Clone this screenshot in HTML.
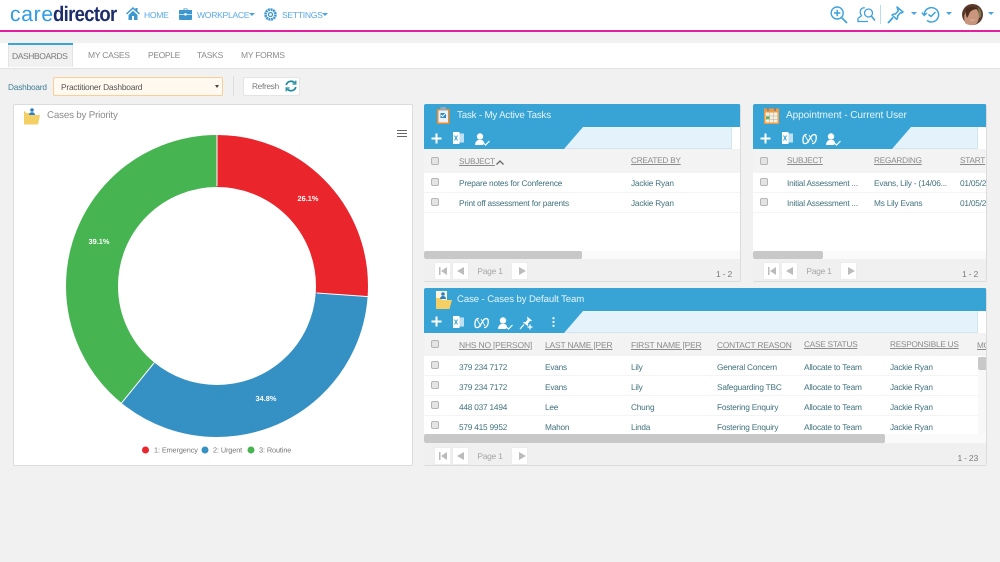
<!DOCTYPE html>
<html lang="en">
<head>
<meta charset="utf-8">
<title>CareDirector Dashboards</title>
<style>
html,body{margin:0;padding:0;width:1000px;height:562px;overflow:hidden;background:#f1f1f1;font-family:"Liberation Sans",sans-serif;text-rendering:geometricPrecision;}
#w{position:absolute;left:0;top:0;width:1000px;height:562px;overflow:hidden;background:#f1f1f1;filter:blur(.3px);}
.a{position:absolute;}
.t{position:absolute;white-space:nowrap;line-height:12px;}
svg{position:absolute;overflow:visible;}
#top{left:0;top:0;width:1000px;height:30px;background:#fff;border-bottom:2px solid #e0219b;}
.nav{font-size:8.6px;letter-spacing:-.3px;color:#5aa9e6;top:9px;}
.caret{position:absolute;width:0;height:0;border-left:3px solid transparent;border-right:3px solid transparent;border-top:3px solid #4aa3de;}
#tabs{left:0;top:43px;width:1000px;height:25px;background:#fff;border-bottom:1px solid #e2e2e2;}
.tab{font-size:8.5px;letter-spacing:-.25px;color:#8a8a8a;top:6px;}
.panel{position:absolute;background:#fff;border:1px solid #dcdcdc;border-left:0;border-top:0;border-radius:2px;box-sizing:border-box;overflow:hidden;}
.hd{position:absolute;left:0;top:0;right:0;background:#37a4d5;}
.ttl{font-size:9.8px;letter-spacing:-.2px;color:#e6f4fb;}
.gh{position:absolute;left:0;right:0;background:#f3f3f3;}
.th{font-size:8.2px;letter-spacing:-.2px;color:#8b8b8b;text-decoration:underline;}
.td{font-size:8.3px;letter-spacing:-.22px;color:#44747f;}
.row{position:absolute;left:0;right:0;height:19px;border-bottom:1px solid #f4f4f4;background:#fff;}
.cb{position:absolute;width:6px;height:6px;background:#e4e4e4;border:1px solid #b5b5b5;border-radius:2px;}
.ft{position:absolute;left:0;right:0;bottom:0;background:#f0f0f0;}
.sc{position:absolute;left:0;right:0;background:#fafafa;}
.th2{position:absolute;background:#c8c8c8;border-radius:2px;}
.pg{position:absolute;top:3px;height:18px;background:#fff;border:1px solid #ececec;box-sizing:border-box;}
.pgt{position:absolute;background:#f0f0f0;top:3px;height:18px;font-size:8.4px;letter-spacing:-.2px;color:#a5a5a5;line-height:19px;text-align:center;}
.cnt{font-size:8.5px;letter-spacing:-.2px;color:#777;}
</style>
</head>
<body>
<div id="w">

<!-- Top bar -->
<div id="top" class="a">
  <div class="t" style="left:10px;top:1px;font-size:21px;line-height:27px;letter-spacing:.75px;color:#2f9be4;">care</div>
  <div class="t" style="left:53px;top:1px;font-size:21px;line-height:27px;letter-spacing:-.75px;font-weight:bold;color:#1d2c6b;transform:scaleX(.88);transform-origin:0 0;">director</div>

  <svg style="left:126px;top:7px" width="14" height="13" viewBox="0 0 14 13"><path d="M7 0L0 6.500l1 1L7 2l6 5.500 1-1-2.500-2.300V1h-2v1.400zM2.500 8v5h3.500V9h2v4h3.500V8L7 3.800z" fill="#3d97cf"/></svg>
  <div class="t nav" style="left:144px">HOME</div>

  <svg style="left:179px;top:8px" width="13" height="12" viewBox="0 0 13 12"><path d="M4.500 2V.5h4V2H12.500a.5.5 0 0 1 .5.500V11a1 1 0 0 1-1 1H1a1 1 0 0 1-1-1V2.500A.5.5 0 0 1 .5 2zM5.500 1v1h2V1z" fill="#3d97cf"/><rect x="0" y="6" width="13" height="1" fill="#bfe0f2"/><rect x="5.500" y="5" width="2" height="2.500" fill="#fff"/></svg>
  <div class="t nav" style="left:197px">WORKPLACE</div>
  <div class="caret" style="left:249px;top:13px"></div>

  <svg style="left:264px;top:8px" width="13" height="13" viewBox="0 0 13 13"><circle cx="6.500" cy="6.500" r="5" fill="none" stroke="#3d97cf" stroke-width="2.600" stroke-dasharray="2 .6"/><circle cx="6.500" cy="6.500" r="3.300" fill="#fff"/><circle cx="6.500" cy="6.500" r="2" fill="none" stroke="#3d97cf" stroke-width="1.300"/></svg>
  <div class="t nav" style="left:282px">SETTINGS</div>
  <div class="caret" style="left:322px;top:13px"></div>

  <!-- Right icons -->
  <svg style="left:830px;top:6px" width="18" height="18" viewBox="0 0 18 18" fill="none" stroke="#3fa2dc" stroke-width="1.400"><circle cx="7.200" cy="7" r="6"/><path d="M11.500 11.500L17 17" stroke-width="1.700"/><path d="M7.200 3.800v6.400M4 7h6.400" stroke-width="1.500"/></svg>
  <svg style="left:857px;top:7px" width="19" height="16" viewBox="0 0 19 16" fill="none" stroke="#3fa2dc" stroke-width="1.300"><path d="M11 14.500H1v-2.700c0-1.500 3-2 3.500-3.200C3.200 7 3 5 3.500 3.300 4 1.500 6 .6 7.800 .8"/><circle cx="11.500" cy="6" r="4"/><path d="M14.300 9l3.700 4.500" stroke-width="1.600"/></svg>
  <div class="a" style="left:880px;top:5px;width:1px;height:19px;background:#b9dcef"></div>
  <svg style="left:887px;top:6px" width="17" height="18" viewBox="0 0 17 18" fill="none" stroke="#3fa2dc" stroke-width="1.500"><path d="M10 1l6 5-1.500 1-1-.3-3 3.300c.5 1.500 0 2.500-.8 3.300L5 9c1-1 2.200-1.200 3.300-.9l3-3.200-.4-1.300z" stroke-linejoin="round"/><path d="M6 11.500L1 17" stroke-width="1.800"/></svg>
  <div class="caret" style="left:911px;top:12px"></div>
  <svg style="left:921px;top:6px" width="20" height="17" viewBox="0 0 20 17" fill="none" stroke="#3fa2dc" stroke-width="1.500"><path d="M3.200 8.500A7.200 7.200 0 1 1 6 14.500"/><path d="M.8 6.500l2.400 3 2.800-2.600" stroke-width="1.400"/><path d="M7.500 8.500l2.500 2 4.500-4.500"/></svg>
  <div class="caret" style="left:946px;top:12px"></div>
  <svg style="left:962px;top:4px" width="21" height="21" viewBox="0 0 21 21"><circle cx="10.500" cy="10.500" r="10.500" fill="#5a3a2a"/><path d="M3 19C1 13 3 5 9 3c5 0 8 4 8 9 0 3-1 6-3 8a10 10 0 0 1-11-1z" fill="#c9957d"/><path d="M4 5c3-3 9-3 12 0-3 0-6 1-8 3-1 2-2 5-3 6-1-3-2-6-1-9z" fill="#4b2c1e"/><path d="M8 15c2 1.500 4 1 5 0-1 2-4 2-5 0z" fill="#f2e1d8"/><path d="M16 3a10 10 0 0 1 3 10l-2 1c0-4-.5-8-1-11z" fill="#7d7a52"/></svg>
  <div class="caret" style="left:988px;top:12px"></div>
</div>

<!-- Tabs -->
<div id="tabs" class="a">
  <div class="a" style="left:8px;top:0;width:65px;height:24px;background:#f1f1f1;border-top:1px solid #3aa5dc;box-shadow:inset 0 1px 0 #3aa5dc,inset 1px 0 0 #e4e4e4,inset -1px 0 0 #e4e4e4;box-sizing:border-box;"></div>
  <div class="t tab" style="left:12px;top:7px;color:#7b7b7b;letter-spacing:-.4px">DASHBOARDS</div>
  <div class="t tab" style="left:88px">MY CASES</div>
  <div class="t tab" style="left:148px;letter-spacing:-.35px">PEOPLE</div>
  <div class="t tab" style="left:197px">TASKS</div>
  <div class="t tab" style="left:241px">MY FORMS</div>
</div>

<!-- Filter row -->
<div class="t" style="left:8px;top:81px;font-size:8.3px;letter-spacing:-.2px;color:#3f7f95">Dashboard</div>
<div class="a" style="left:53px;top:77px;width:170px;height:19px;background:#fff9ef;border:1px solid #f6cf9a;border-radius:2px;box-sizing:border-box"></div>
<div class="t" style="left:61px;top:81px;font-size:8.4px;letter-spacing:-.2px;color:#555">Practitioner Dashboard</div>
<div class="caret" style="left:215px;top:85px;border-top-color:#444;border-left-width:2px;border-right-width:2px"></div>
<div class="a" style="left:233px;top:76px;width:1px;height:20px;background:#dedede"></div>
<div class="a" style="left:243px;top:77px;width:57px;height:19px;background:#fff;border:1px solid #e4e4e4;border-radius:2px;box-sizing:border-box"></div>
<div class="t" style="left:252px;top:81px;font-size:8.2px;letter-spacing:-.25px;color:#777">Refresh</div>
<svg style="left:285px;top:80px" width="12" height="12" viewBox="0 0 12 12" fill="none" stroke="#1f8a9e" stroke-width="1.700"><path d="M1.200 5A5 5 0 0 1 9.800 3"/><path d="M10.800 7A5 5 0 0 1 2.200 9"/><path d="M10.800 .6v3.400H7.400" stroke-width="1.300"/><path d="M1.200 11.400V8h3.400" stroke-width="1.300"/></svg>

<!-- Chart panel -->
<div class="panel" style="left:13px;top:104px;width:400px;height:362px;border-left:1px solid #dcdcdc;border-top:1px solid #dcdcdc">
  <svg style="left:9px;top:3px" width="18" height="17" viewBox="0 0 18 17"><path d="M1 3.500h1.500V14.500H1z" fill="#e8c04f"/><path d="M1 5h6l1 2h9l-2 9.500H1z" fill="#f4cf63"/><circle cx="9" cy="2" r="1.800" fill="#2f7fc4"/><path d="M6 7c0-2 1.500-2.800 3-2.800S12 5 12 7z" fill="#2f7fc4"/></svg>
  <div class="t" style="left:33px;top:5px;font-size:9.8px;letter-spacing:-.2px;color:#8d8d8d">Cases by Priority</div>
  <svg style="left:383px;top:25px" width="10" height="7" viewBox="0 0 10 7"><path d="M0 .5h10M0 3.500h10M0 6.500h10" stroke="#666" stroke-width="1"/></svg>

  <svg style="left:-1px;top:-1px" width="398" height="360" viewBox="13 104 398 360" overflow="visible">
    <g fill="none" stroke-width="52" transform="rotate(-90 217 286)">
      <circle cx="217" cy="286" r="125" stroke="#ea252c" pathLength="100" stroke-dasharray="26.1 73.9" stroke-dashoffset="0"/>
      <circle cx="217" cy="286" r="125" stroke="#3590c3" pathLength="100" stroke-dasharray="34.8 65.2" stroke-dashoffset="-26.1"/>
      <circle cx="217" cy="286" r="125" stroke="#46b450" pathLength="100" stroke-dasharray="39.1 60.9" stroke-dashoffset="-60.9"/>
    </g>
    <path d="M217 134V186M316.800 293L368.600 296.600M154 363L121 403.700" stroke="#fff" stroke-width="1"/>
    <g font-family="Liberation Sans, sans-serif" font-size="7.4" font-weight="bold" fill="#fff" text-anchor="middle">
      <text x="308" y="201">26.1%</text>
      <text x="266" y="401">34.8%</text>
      <text x="99" y="244">39.1%</text>
    </g>
    <circle cx="145.500" cy="450" r="3.500" fill="#ea252c"/>
    <circle cx="205" cy="450" r="3.500" fill="#3590c3"/>
    <circle cx="251" cy="450" r="3.500" fill="#46b450"/>
    <g font-family="Liberation Sans, sans-serif" font-size="7.3" letter-spacing="-.1" fill="#777">
      <text x="154" y="452.500">1: Emergency</text>
      <text x="213" y="452.500">2: Urgent</text>
      <text x="259" y="452.500">3: Routine</text>
    </g>
  </svg>
</div>

<!-- Task panel -->
<div class="panel" style="left:424px;top:104px;width:317px;height:178px">
  <div class="hd" style="height:23px"></div>
  <div class="hd" style="top:23px;height:21px;background:#e4f3fb;right:8px;border-right:1px solid #d3e5ee;border-bottom:1px solid #d3e5ee"></div>
  <svg style="left:0;top:23px" width="160" height="22" viewBox="0 0 160 22"><path d="M0 0H159L140 22H0z" fill="#37a4d5"/></svg>
  <svg style="left:13px;top:3px" width="14" height="18" viewBox="0 0 14 18"><rect x="0" y="2" width="12.500" height="15" fill="#f08a2c"/><rect x="1.500" y="3.500" width="9.500" height="12" fill="#e7f2fa"/><rect x="3.500" y="0" width="5.500" height="3.500" fill="#9aa9b5"/><rect x="3.500" y="6" width="5.500" height="5" fill="#2f86c9"/><path d="M4 8l1.500 1.500L9 6" stroke="#fff" fill="none"/></svg>
  <div class="t ttl" style="left:33px;top:6px">Task - My Active Tasks</div>
  <svg style="left:7px;top:29px" width="11" height="11" viewBox="0 0 11 11"><path d="M5.500 .5v10M.5 5.500h10" stroke="#fff" stroke-width="2"/></svg>
  <svg style="left:29px;top:28px" width="11" height="12" viewBox="0 0 11 12"><rect x="3" y="1.500" width="8" height="9" fill="#bfe0f2"/><rect x="0" y="0" width="6.500" height="12" fill="#fff"/><path d="M1.500 3.500l3 5M4.500 3.500l-3 5" stroke="#37a4d5"/></svg>
  <svg style="left:51px;top:29px" width="15" height="13" viewBox="0 0 15 13"><circle cx="5" cy="3.500" r="3.200" fill="#fff"/><path d="M0 12c0-3 2-4.500 3-5h4c1 .5 2 1.500 2 3l-1 2z" fill="#fff"/><path d="M8.500 10l2 2 4-4" stroke="#fff" fill="none" stroke-width="1.200"/></svg>

  <div class="gh" style="top:45px;height:24px"></div>
  <div class="cb" style="left:7px;top:53px"></div>
  <div class="t th" style="left:35px;top:52px">SUBJECT</div>
  <svg style="left:72px;top:56px" width="8" height="5" viewBox="0 0 8 5"><path d="M.5 4.500L4 1l3.500 3.500" fill="none" stroke="#666" stroke-width="1.300"/></svg>
  <div class="t th" style="left:207px;top:51px">CREATED BY</div>

  <div class="row" style="top:69px"></div>
  <div class="cb" style="left:7px;top:74px"></div>
  <div class="t td" style="left:35px;top:73px">Prepare notes for Conference</div>
  <div class="t td" style="left:207px;top:73px">Jackie Ryan</div>
  <div class="row" style="top:89px"></div>
  <div class="cb" style="left:7px;top:94px"></div>
  <div class="t td" style="left:35px;top:93px">Print off assessment for parents</div>
  <div class="t td" style="left:207px;top:93px">Jackie Ryan</div>

  <div class="sc" style="top:147px;height:8px"></div>
  <div class="th2" style="left:0;top:147px;width:158px;height:8px"></div>
  <div class="ft" style="height:22px">
    <div class="pg" style="left:10px;width:17px"></div><div class="pg" style="left:28px;width:17px"></div>
    <div class="pgt" style="left:45px;width:42px">Page 1</div>
    <div class="pg" style="left:87px;width:17px"></div>
    <svg style="left:15px;top:8px" width="8" height="8" viewBox="0 0 8 8"><path d="M0 0h1.500v8H0zM8 0v8L2 4z" fill="#bbb"/></svg>
    <svg style="left:33px;top:8px" width="7" height="8" viewBox="0 0 7 8"><path d="M7 0v8L0 4z" fill="#bbb"/></svg>
    <svg style="left:95px;top:8px" width="7" height="8" viewBox="0 0 7 8"><path d="M0 0v8l7-4z" fill="#bbb"/></svg>
    <div class="t cnt" style="right:8px;top:9px">1 - 2</div>
  </div>
</div>

<!-- Appointment panel -->
<div class="panel" style="left:753px;top:104px;width:234px;height:178px">
  <div class="hd" style="height:23px"></div>
  <div class="hd" style="top:23px;height:21px;background:#e4f3fb;right:8px;border-right:1px solid #d3e5ee;border-bottom:1px solid #d3e5ee"></div>
  <svg style="left:0;top:23px" width="160" height="22" viewBox="0 0 160 22"><path d="M0 0H158L139 22H0z" fill="#37a4d5"/></svg>
  <svg style="left:11px;top:3px" width="15" height="17" viewBox="0 0 15 17"><rect x="0" y="1.500" width="15" height="15.500" fill="#f29a3f"/><rect x="1.500" y="5.500" width="12" height="10" fill="#f4f1e4"/><path d="M1.500 9h12M1.500 12.500h12M5.500 5.500v10M9.500 5.500v10" stroke="#c7c1a8" stroke-width=".7"/><rect x="2" y="9.500" width="3.500" height="2.500" fill="#59b25a"/><rect x="3" y="0" width="2" height="4" fill="#7c8a92"/><rect x="10" y="0" width="2" height="4" fill="#7c8a92"/></svg>
  <div class="t ttl" style="left:33px;top:6px;font-size:10.1px;letter-spacing:-.1px">Appointment - Current User</div>
  <svg style="left:7px;top:29px" width="11" height="11" viewBox="0 0 11 11"><path d="M5.500 .5v10M.5 5.500h10" stroke="#fff" stroke-width="2"/></svg>
  <svg style="left:29px;top:28px" width="11" height="12" viewBox="0 0 11 12"><rect x="3" y="1.500" width="8" height="9" fill="#bfe0f2"/><rect x="0" y="0" width="6.500" height="12" fill="#fff"/><path d="M1.500 3.500l3 5M4.500 3.500l-3 5" stroke="#37a4d5"/></svg>
  <svg style="left:49px;top:29px" width="15" height="12" viewBox="0 0 15 12" fill="none" stroke="#fff" stroke-width="1.300"><path d="M5 1.500H3.500C.5 3 .5 8 1.500 10c1 1 3 .5 4-.5L10 2.500c1-1 3-1.500 4 0 .5 2 .5 6-2.500 8H10"/><path d="M3 2.500l4 7M7 2l4 7" stroke-width=".8"/></svg>
  <svg style="left:73px;top:29px" width="15" height="13" viewBox="0 0 15 13"><circle cx="5" cy="3.500" r="3.200" fill="#fff"/><path d="M0 12c0-3 2-4.500 3-5h4c1 .5 2 1.500 2 3l-1 2z" fill="#fff"/><path d="M8.500 10l2 2 4-4" stroke="#fff" fill="none" stroke-width="1.200"/></svg>

  <div class="gh" style="top:45px;height:24px"></div>
  <div class="cb" style="left:7px;top:53px"></div>
  <div class="t th" style="left:34px;top:51px">SUBJECT</div>
  <div class="t th" style="left:121px;top:51px">REGARDING</div>
  <div class="t th" style="left:207px;top:51px">START</div>

  <div class="row" style="top:69px"></div>
  <div class="cb" style="left:7px;top:74px"></div>
  <div class="t td" style="left:34px;top:73px">Initial Assessment ...</div>
  <div class="t td" style="left:121px;top:73px">Evans, Lily - (14/06...</div>
  <div class="t td" style="left:207px;top:73px">01/05/2</div>
  <div class="row" style="top:89px"></div>
  <div class="cb" style="left:7px;top:94px"></div>
  <div class="t td" style="left:34px;top:93px">Initial Assessment ...</div>
  <div class="t td" style="left:121px;top:93px">Ms Lily Evans</div>
  <div class="t td" style="left:207px;top:93px">01/05/2</div>

  <div class="sc" style="top:147px;height:8px"></div>
  <div class="th2" style="left:0;top:147px;width:70px;height:8px"></div>
  <div class="ft" style="height:22px">
    <div class="pg" style="left:10px;width:17px"></div><div class="pg" style="left:28px;width:17px"></div>
    <div class="pgt" style="left:45px;width:42px">Page 1</div>
    <div class="pg" style="left:87px;width:17px"></div>
    <svg style="left:15px;top:8px" width="8" height="8" viewBox="0 0 8 8"><path d="M0 0h1.500v8H0zM8 0v8L2 4z" fill="#bbb"/></svg>
    <svg style="left:33px;top:8px" width="7" height="8" viewBox="0 0 7 8"><path d="M7 0v8L0 4z" fill="#bbb"/></svg>
    <svg style="left:95px;top:8px" width="7" height="8" viewBox="0 0 7 8"><path d="M0 0v8l7-4z" fill="#bbb"/></svg>
    <div class="t cnt" style="right:8px;top:9px">1 - 2</div>
  </div>
</div>

<!-- Case panel -->
<div class="panel" style="left:424px;top:288px;width:563px;height:178px">
  <div class="hd" style="height:23px"></div>
  <div class="hd" style="top:23px;height:21px;background:#e4f3fb;right:8px;border-right:1px solid #d3e5ee;border-bottom:1px solid #d3e5ee"></div>
  <svg style="left:0;top:23px" width="160" height="22" viewBox="0 0 160 22"><path d="M0 0H159L140 22H0z" fill="#37a4d5"/></svg>
  <svg style="left:11px;top:3px" width="18" height="18" viewBox="0 0 18 18"><path d="M1 0h11v15H1z" fill="#fdf6dc"/><path d="M1 7h5l1 2h10l-2.500 9H1z" fill="#f4cf63"/><circle cx="8" cy="3" r="1.800" fill="#2f7fc4"/><path d="M5 8c0-2 1.500-3 3-3s3 1 3 3z" fill="#2f7fc4"/></svg>
  <div class="t ttl" style="left:33px;top:6px;font-size:9.6px;letter-spacing:-.1px">Case - Cases by Default Team</div>
  <svg style="left:7px;top:28px" width="11" height="11" viewBox="0 0 11 11"><path d="M5.500 .5v10M.5 5.500h10" stroke="#fff" stroke-width="2"/></svg>
  <svg style="left:29px;top:28px" width="11" height="12" viewBox="0 0 11 12"><rect x="3" y="1.500" width="8" height="9" fill="#bfe0f2"/><rect x="0" y="0" width="6.500" height="12" fill="#fff"/><path d="M1.500 3.500l3 5M4.500 3.500l-3 5" stroke="#37a4d5"/></svg>
  <svg style="left:50px;top:29px" width="15" height="12" viewBox="0 0 15 12" fill="none" stroke="#fff" stroke-width="1.300"><path d="M5 1.500H3.500C.5 3 .5 8 1.500 10c1 1 3 .5 4-.5L10 2.500c1-1 3-1.500 4 0 .5 2 .5 6-2.500 8H10"/><path d="M3 2.500l4 7M7 2l4 7" stroke-width=".8"/></svg>
  <svg style="left:74px;top:29px" width="15" height="13" viewBox="0 0 15 13"><circle cx="5" cy="3.500" r="3.200" fill="#fff"/><path d="M0 12c0-3 2-4.500 3-5h4c1 .5 2 1.500 2 3l-1 2z" fill="#fff"/><path d="M8.500 10l2 2 4-4" stroke="#fff" fill="none" stroke-width="1.200"/></svg>
  <svg style="left:96px;top:28px" width="14" height="14" viewBox="0 0 14 14"><path d="M7 .5l5 4-1 .8-1-.3-2 2.500c.3 1 .2 1.800-.3 2.500L3 6.500c.8-.5 1.600-.6 2.500-.3l2-2.500z" fill="#fff"/><path d="M4 8.500L0 13" stroke="#fff" stroke-width="1.200"/><path d="M10 8.500v5M7.500 11h5" stroke="#fff" stroke-width="1.300"/></svg>
  <svg style="left:128px;top:29px" width="3" height="10" viewBox="0 0 3 10"><circle cx="1.500" cy="1.200" r="1.100" fill="#fff"/><circle cx="1.500" cy="5" r="1.100" fill="#fff"/><circle cx="1.500" cy="8.800" r="1.100" fill="#fff"/></svg>

  <div class="gh" style="top:45px;height:24px"></div>
  <div class="cb" style="left:7px;top:52px"></div>
  <div class="t th" style="left:35px;top:51px;font-size:8.5px">NHS NO [PERSON]</div>
  <div class="t th" style="left:121px;top:51px;font-size:8.5px">LAST NAME [PER</div>
  <div class="t th" style="left:207px;top:51px;font-size:8.5px">FIRST NAME [PER</div>
  <div class="t th" style="left:293px;top:51px;font-size:8.4px">CONTACT REASON</div>
  <div class="t th" style="left:380px;top:51px">CASE STATUS</div>
  <div class="t th" style="left:466px;top:51px">RESPONSIBLE US</div>
  <div class="t th" style="left:553px;top:52px">MO</div>

  <div class="row" style="top:68px"></div>
  <div class="cb" style="left:7px;top:73px"></div>
  <div class="t td" style="left:35px;top:73px">379 234 7172</div>
  <div class="t td" style="left:121px;top:73px">Evans</div>
  <div class="t td" style="left:207px;top:73px">Lily</div>
  <div class="t td" style="left:293px;top:73px">General Concern</div>
  <div class="t td" style="left:380px;top:73px">Allocate to Team</div>
  <div class="t td" style="left:466px;top:73px">Jackie Ryan</div>

  <div class="row" style="top:88px"></div>
  <div class="cb" style="left:7px;top:93px"></div>
  <div class="t td" style="left:35px;top:93px">379 234 7172</div>
  <div class="t td" style="left:121px;top:93px">Evans</div>
  <div class="t td" style="left:207px;top:93px">Lily</div>
  <div class="t td" style="left:293px;top:93px">Safeguarding TBC</div>
  <div class="t td" style="left:380px;top:93px">Allocate to Team</div>
  <div class="t td" style="left:466px;top:93px">Jackie Ryan</div>

  <div class="row" style="top:108px"></div>
  <div class="cb" style="left:7px;top:113px"></div>
  <div class="t td" style="left:35px;top:113px">448 037 1494</div>
  <div class="t td" style="left:121px;top:113px">Lee</div>
  <div class="t td" style="left:207px;top:113px">Chung</div>
  <div class="t td" style="left:293px;top:113px">Fostering Enquiry</div>
  <div class="t td" style="left:380px;top:113px">Allocate to Team</div>
  <div class="t td" style="left:466px;top:113px">Jackie Ryan</div>

  <div class="row" style="top:128px"></div>
  <div class="cb" style="left:7px;top:133px"></div>
  <div class="t td" style="left:35px;top:133px">579 415 9952</div>
  <div class="t td" style="left:121px;top:133px">Mahon</div>
  <div class="t td" style="left:207px;top:133px">Linda</div>
  <div class="t td" style="left:293px;top:133px">Fostering Enquiry</div>
  <div class="t td" style="left:380px;top:133px">Allocate to Team</div>
  <div class="t td" style="left:466px;top:133px">Jackie Ryan</div>

  <div class="a" style="left:554px;top:69px;width:9px;height:85px;background:#f8f8f8"></div>
  <div class="th2" style="left:554px;top:69px;width:9px;height:13px;"></div>
  <div class="sc" style="top:146px;height:9px"></div>
  <div class="th2" style="left:0;top:146px;width:461px;height:9px"></div>
  <div class="ft" style="height:22px">
    <div class="pg" style="left:10px;width:17px;top:4px"></div><div class="pg" style="left:28px;width:17px;top:4px"></div>
    <div class="pgt" style="left:45px;width:42px;top:4px;line-height:18px">Page 1</div>
    <div class="pg" style="left:87px;width:17px;top:4px"></div>
    <svg style="left:15px;top:9px" width="8" height="8" viewBox="0 0 8 8"><path d="M0 0h1.500v8H0zM8 0v8L2 4z" fill="#bbb"/></svg>
    <svg style="left:33px;top:9px" width="7" height="8" viewBox="0 0 7 8"><path d="M7 0v8L0 4z" fill="#bbb"/></svg>
    <svg style="left:95px;top:9px" width="7" height="8" viewBox="0 0 7 8"><path d="M0 0v8l7-4z" fill="#bbb"/></svg>
    <div class="t cnt" style="right:8px;top:9px">1 - 23</div>
  </div>
</div>

</div>
</body>
</html>
